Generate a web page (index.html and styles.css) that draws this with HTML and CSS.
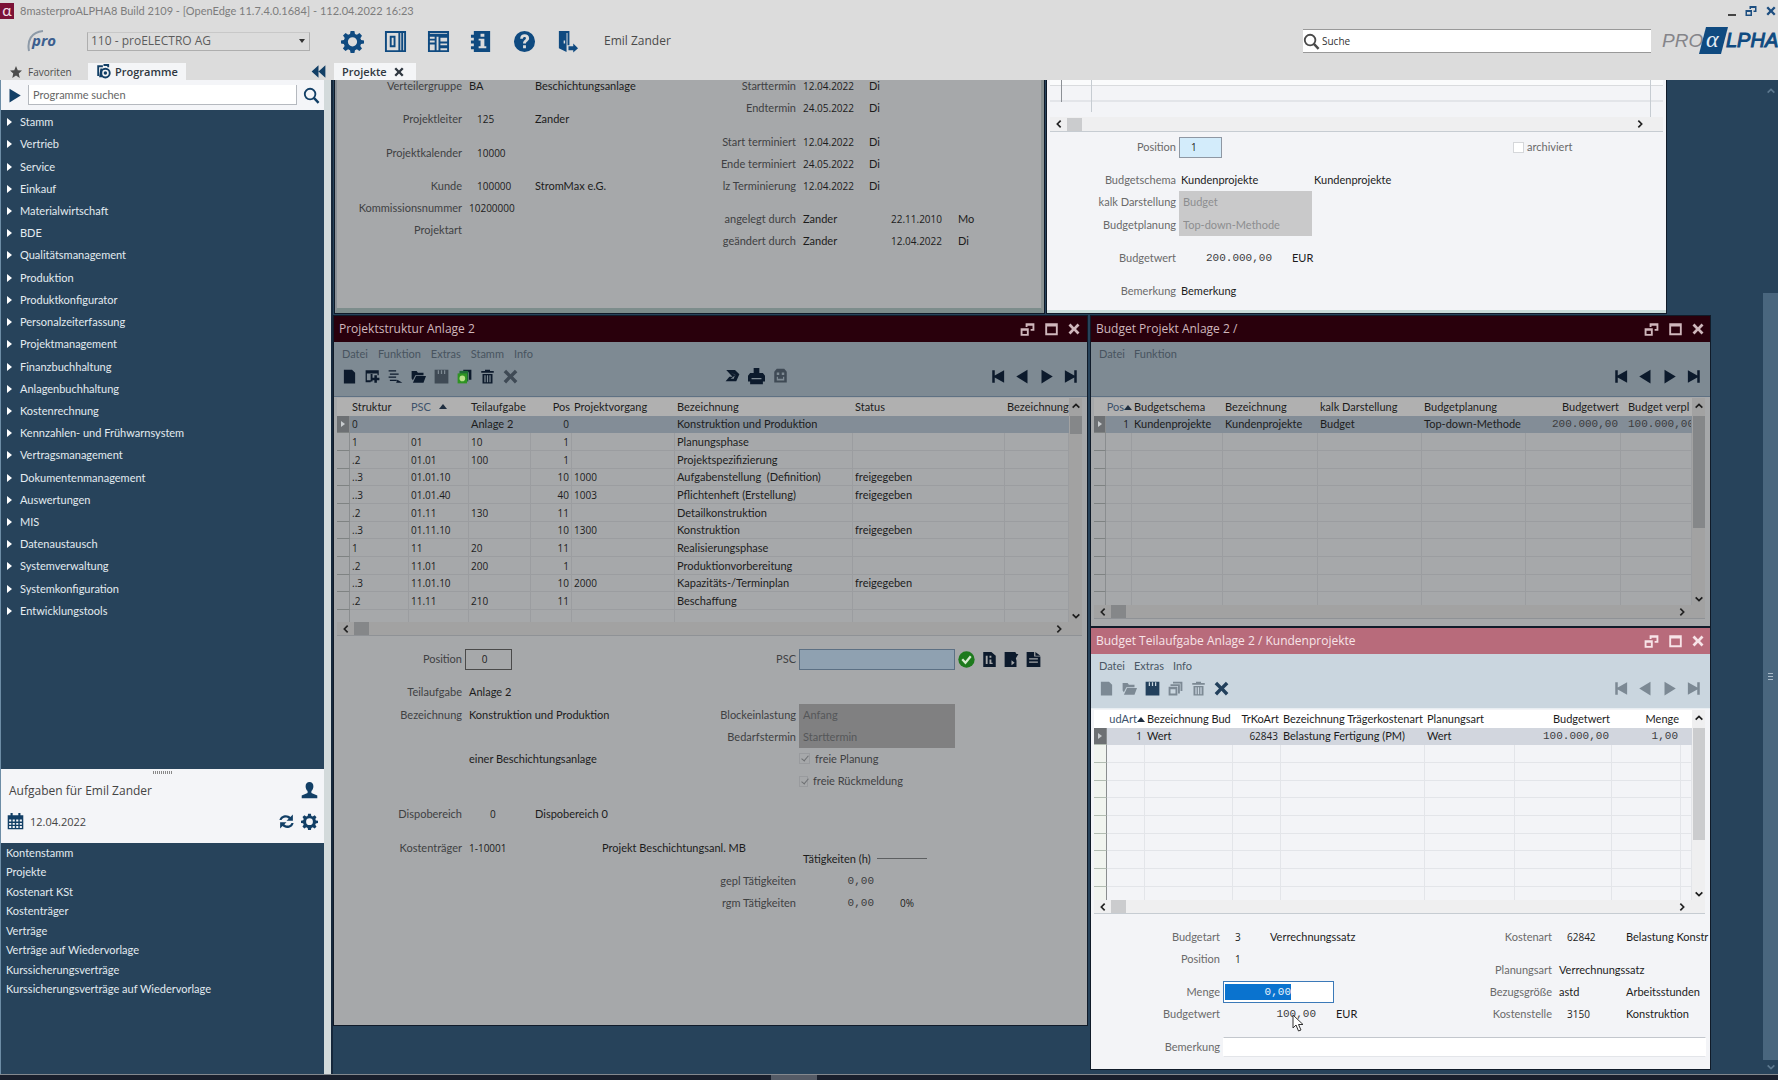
FILE: index.html
```html
<!DOCTYPE html>
<html lang="de">
<head>
<meta charset="utf-8">
<title>proALPHA - Projekte</title>
<link rel="stylesheet" href="styles.css">
</head>
<body>
<svg class="sprite" aria-hidden="true">
  <symbol id="gear" viewBox="0 0 24 24"><path fill-rule="evenodd" d="M10 1h4l.6 3.1 2 .9 2.7-1.8 2.6 2.7-1.7 2.6.8 2L24 11v3l-3.1.7-.8 1.9 1.8 2.7-2.7 2.6-2.6-1.7-2 .8L14 24h-4l-.6-3-2-.8-2.7 1.7L2 19.200l1.800-2.600-.8-2L0 14v-3l3.100-.6.8-2L2.100 5.800 4.800 3.100l2.600 1.800 2-.8zM12 7.500a4.800 4.800 0 1 0 0 9.600 4.800 4.800 0 0 0 0-9.600z"/></symbol>
  <symbol id="cols" viewBox="0 0 24 24"><path fill-rule="evenodd" d="M1 1h22v22H1zM3 3v18h12V3zM6 6h6v12H6zM8 8v8h2V8zM17 3v18h1V3zM20 3v18h1V3z"/></symbol>
  <symbol id="layout" viewBox="0 0 24 24"><path fill-rule="evenodd" d="M1 1h22v22H1zM3 3v1h18V3zM3 7v2h5V7zM3 11v2h5v-2zM3 15v6h5v-6zM10 7v14h2V7zM14 8v4h7V8zM14 14v2h7v-2zM14 19v2h7v-2z"/></symbol>
  <symbol id="infobook" viewBox="0 0 24 24"><path fill-rule="evenodd" d="M4 1h17v22H4v-3H1v-3h3v-3H1v-3h3V8H1V5h3zM11 4v3h4V4zM9 9v2h2v6H9v2h8v-2h-2V9z"/></symbol>
  <symbol id="help" viewBox="0 0 24 24"><path fill-rule="evenodd" d="M12 1a11 11 0 1 0 0 22 11 11 0 0 0 0-22zM7.500 9C7.500 6 9.500 4.500 12.200 4.500c2.600 0 4.600 1.500 4.600 4 0 3-3.300 3.300-3.300 5.500h-3c0-3.600 3-3.500 3-5.400 0-.9-.6-1.400-1.500-1.400s-1.600.6-1.700 1.800zM10.500 16h3v3h-3z"/></symbol>
  <symbol id="exit" viewBox="0 0 24 24"><path fill-rule="evenodd" d="M3 1h11v15h-2V3h-1v20L3 19zM8 11v3h1.500v-3z"/><path d="M13 17h5v-3l5 5-5 4.500V21h-5z"/></symbol>
  <symbol id="star" viewBox="0 0 24 24"><path d="M12 0l3.500 8.500L24 9l-6.500 5.800L19.500 24 12 19l-7.500 5 2-9.200L0 9l8.500-.5z"/></symbol>
  <symbol id="programs" viewBox="0 0 24 24"><path d="M2 2h9v3H5v14H2zM7 7h3v14H5z"/><path fill-rule="evenodd" d="M15 6a8.500 8.500 0 1 0 0 17 8.500 8.500 0 0 0 0-17zM15 9a5.500 5.500 0 1 1 0 11 5.500 5.500 0 0 1 0-11z"/><circle cx="15" cy="14.500" r="2.800"/><path d="M12 0h9v5h-3V3h-6z"/></symbol>
  <symbol id="rewind" viewBox="0 0 24 24"><path d="M12 2v20L1 12zM23 2v20L12 12z"/></symbol>
  <symbol id="play" viewBox="0 0 24 24"><path d="M4 1l18 11L4 23z"/></symbol>
  <symbol id="back" viewBox="0 0 24 24"><path d="M20 1L2 12l18 11z"/></symbol>
  <symbol id="first" viewBox="0 0 24 24"><path d="M2 2h4v8.500L21 2v20L6 13.500V22H2z"/></symbol>
  <symbol id="last" viewBox="0 0 24 24"><path d="M22 2h-4v8.500L3 2v20l15-8.500V22h4z"/></symbol>
  <symbol id="lens" viewBox="0 0 24 24"><circle cx="10" cy="10" r="7.500" fill="none" stroke="currentColor" stroke-width="2.600"/><path d="M15 15l7 7.500" stroke="currentColor" stroke-width="3.400"/></symbol>
  <symbol id="calendar" viewBox="0 0 24 24"><path fill-rule="evenodd" d="M1 3h4V0h3v3h8V0h3v3h4v20H1zM3 9v3h3V9zm5 0v3h3V9zm5 0v3h3V9zm5 0v3h3V9zM3 14v2.500h3V14zm5 0v2.500h3V14zm5 0v2.500h3V14zm5 0v2.500h3V14zM3 18.500V21h3v-2.500zm5 0V21h3v-2.500zm5 0V21h3v-2.500zm5 0V21h3v-2.500z"/></symbol>
  <symbol id="person" viewBox="0 0 24 24"><path d="M12 0c3.500 0 5.500 2.700 5.500 6 0 3-1.200 5.500-2.800 6.800v2.700L23 19v4H1v-4l8.300-3.500v-2.700C7.700 11.500 6.500 9 6.500 6c0-3.300 2-6 5.500-6z"/></symbol>
  <symbol id="refresh" viewBox="0 0 24 24"><path d="M2 10c1-5 5-7 9-7 3 0 5 1 6.500 2.500L21 2v9h-9l3-3c-1-1-2.500-1.800-4.500-1.800C8 6.200 6 7.500 5 10zM22 14c-1 5-5 7-9 7-3 0-5-1-6.500-2.500L3 22v-9h9l-3 3c1 1 2.500 1.800 4.500 1.800 2.500 0 4.500-1.300 5.500-3.800z"/></symbol>
  <symbol id="page" viewBox="0 0 24 24"><path d="M3 1h13l5 5v17H3z"/></symbol>
  <symbol id="tableplus" viewBox="0 0 24 24"><path fill-rule="evenodd" d="M1 2h21v8h-2V7H3v11h6v3H1zM9 8h3v12H9z"/><path d="M15 10h4v4h4v4h-4v4h-4v-4h-4v-4h4z"/></symbol>
  <symbol id="listadd" viewBox="0 0 24 24"><path d="M1 2h12v2H1zM3 7h14v2H3zM1 12h12v2H1zM3 17h11v2H3zM15 17l8 5H13z"/></symbol>
  <symbol id="folder" viewBox="0 0 24 24"><path d="M1 3h8l2 3h9v4H7l-4 8-2-3z"/><path d="M8 11h16l-4 11H3z"/></symbol>
  <symbol id="save" viewBox="0 0 24 24"><path fill-rule="evenodd" d="M1 1h22v22H1zM6 2v6h2V2zm5 0v6h2V2zm5 0v6h2V2z"/></symbol>
  <symbol id="copies" viewBox="0 0 24 24"><path fill-rule="evenodd" d="M8 1h15v15h-3V4H8zM4 5h15v15h-3V8H4zM1 9h14v14H1zM4 13v7h8v-7z"/></symbol>
  <symbol id="copygreen" viewBox="0 0 24 24"><path d="M10 1h13v16h-4V5h-9z"/><path fill="#1d6a35" d="M4 3h14v17H4z"/><path fill="#2f9422" d="M1 7h15v16H1z"/><circle cx="8.500" cy="15" r="4.500" fill="#b9e08a"/></symbol>
  <symbol id="trash" viewBox="0 0 24 24"><path fill-rule="evenodd" d="M8 1h8v2h6v3H2V3h6zM4 8h16v15H4zM7 10v11h2V10zm4 0v11h2V10zm4 0v11h2V10z"/></symbol>
  <symbol id="cross" viewBox="0 0 24 24"><path d="M5 1l7 7.500L19 1l4 4-7 7 7 7-4 4-7-7.500L5 23l-4-4 7-7-7-7z"/></symbol>
  <symbol id="swoosh" viewBox="0 0 24 24"><path fill-rule="evenodd" d="M2 3h14l7 7-5 11H1l6-7h5zM9 7l7 4-2 6H9l8-6z"/></symbol>
  <symbol id="printer" viewBox="0 0 24 24"><path fill-rule="evenodd" d="M8 0h8v7h5l3 4v8h-3v4H3v-4H0v-8l3-4h5zM5 14v2h14v-2z"/></symbol>
  <symbol id="mask" viewBox="0 0 24 24"><path fill-rule="evenodd" d="M6 1h12l4 5v17H2V6zM6 7v4h4V7zm8 0v4h4V7zM6 14v6h12v-6h-2v3H8v-3z"/></symbol>
  <symbol id="restore" viewBox="0 0 24 24"><path fill-rule="evenodd" d="M9 2h14v12h-6v-3h3V6h-8v2H9zM1 10h13v12H1zM4 14v5h7v-5z"/></symbol>
  <symbol id="max" viewBox="0 0 24 24"><path fill-rule="evenodd" d="M2 2h20v19H2zM5 7v11h14V7z"/></symbol>
  <symbol id="doca" viewBox="0 0 24 24"><path fill-rule="evenodd" d="M2 0h13l7 6v18H2zM6 6v13h3V6zm6 0v3h3V6zm0 6v7h5v-2h-2v-5z"/></symbol>
  <symbol id="docb" viewBox="0 0 24 24"><path fill-rule="evenodd" d="M1 0h17l2 3h3l-4 7 1 4v10H1zM12 13l5 4-5 4z"/></symbol>
  <symbol id="docc" viewBox="0 0 24 24"><path fill-rule="evenodd" d="M1 0h12v7h10v17H1zM15 0l8 6h-8zM5 10v2h14v-2zm0 5v2h14v-2z"/></symbol>
  <symbol id="check" viewBox="0 0 24 24"><circle cx="12" cy="12" r="11.500" fill="#1d7a1d"/><path d="M6 11.500l4.500 5L18 7.500" fill="none" stroke="#d6ecd0" stroke-width="3.200"/></symbol>
  <symbol id="cl" viewBox="0 0 12 12"><path d="M8 2L4 6l4 4" fill="none" stroke="currentColor" stroke-width="2"/></symbol>
  <symbol id="cr" viewBox="0 0 12 12"><path d="M4 2l4 4-4 4" fill="none" stroke="currentColor" stroke-width="2"/></symbol>
  <symbol id="cu" viewBox="0 0 12 12"><path d="M2 8l4-4 4 4" fill="none" stroke="currentColor" stroke-width="2"/></symbol>
  <symbol id="cd" viewBox="0 0 12 12"><path d="M2 4l4 4 4-4" fill="none" stroke="currentColor" stroke-width="2"/></symbol>
</svg>

<header class="top">
  <div class="caption">
    <span class="alpha">α</span>
    <span class="caption-text">8masterproALPHA8 Build 2109 - [OpenEdge 11.7.4.0.1684] - 112.04.2022 16:23</span>
    <div class="caption-buttons">
      <button type="button" aria-label="Minimieren"><span class="dash"></span></button>
      <button type="button" aria-label="Wiederherstellen"><svg class="i12"><use href="#restore"/></svg></button>
      <button type="button" aria-label="Schließen"><svg class="i10"><use href="#cross"/></svg></button>
    </div>
  </div>
  <div class="appbar">
    <svg class="prologo" viewBox="0 0 32 24"><path d="M2 22C0 12 4 3 16 2" fill="none" stroke="#8d9aa8" stroke-width="2"/><text x="5" y="17" class="prologo-text">pro</text></svg>
    <span class="firm"><select aria-label="Firma"><option>110 - proELECTRO AG</option></select></span>
    <div class="appicons">
      <button type="button" aria-label="Einstellungen"><svg class="i22"><use href="#gear"/></svg></button>
      <button type="button" aria-label="Spalten"><svg class="i22"><use href="#cols"/></svg></button>
      <button type="button" aria-label="Layout"><svg class="i22"><use href="#layout"/></svg></button>
      <button type="button" aria-label="Info"><svg class="i22"><use href="#infobook"/></svg></button>
      <button type="button" aria-label="Hilfe"><svg class="i22"><use href="#help"/></svg></button>
      <button type="button" aria-label="Abmelden"><svg class="i22"><use href="#exit"/></svg></button>
    </div>
    <span class="user">Emil Zander</span>
    <label class="search"><svg class="i16"><use href="#lens"/></svg><input type="text" value="Suche" aria-label="Suche"></label>
    <svg class="brand" viewBox="0 0 116 28"><text x="0" y="20" class="brand-grey">PRO</text><path d="M44 0h22l-7 27H37z" fill="#0f4a80"/><text x="44" y="20" class="brand-alpha">α</text><text x="64" y="20" class="brand-blue">LPHA</text></svg>
  </div>
  <div class="tabs">
    <div class="side-tabs">
      <button type="button" class="tab fav"><svg class="i12"><use href="#star"/></svg>Favoriten</button>
      <button type="button" class="tab active prog"><svg class="i14"><use href="#programs"/></svg>Programme</button>
      <button type="button" class="collapse" aria-label="Einklappen"><svg class="i14"><use href="#rewind"/></svg></button>
    </div>
    <button type="button" class="tab active doc">Projekte<svg class="i10"><use href="#cross"/></svg></button>
  </div>
</header>

<main class="main">
  <aside class="side">
    <div class="side-search">
      <svg class="i14"><use href="#play"/></svg>
      <input type="text" value="Programme suchen" aria-label="Programme suchen">
      <svg class="i16"><use href="#lens"/></svg>
    </div>
    <nav class="menu">
      <ul>
        <li><a href="#">Stamm</a></li><li><a href="#">Vertrieb</a></li><li><a href="#">Service</a></li><li><a href="#">Einkauf</a></li>
        <li><a href="#">Materialwirtschaft</a></li><li><a href="#">BDE</a></li><li><a href="#">Qualitätsmanagement</a></li><li><a href="#">Produktion</a></li>
        <li><a href="#">Produktkonfigurator</a></li><li><a href="#">Personalzeiterfassung</a></li><li><a href="#">Projektmanagement</a></li><li><a href="#">Finanzbuchhaltung</a></li>
        <li><a href="#">Anlagenbuchhaltung</a></li><li><a href="#">Kostenrechnung</a></li><li><a href="#">Kennzahlen- und Frühwarnsystem</a></li><li><a href="#">Vertragsmanagement</a></li>
        <li><a href="#">Dokumentenmanagement</a></li><li><a href="#">Auswertungen</a></li><li><a href="#">MIS</a></li><li><a href="#">Datenaustausch</a></li>
        <li><a href="#">Systemverwaltung</a></li><li><a href="#">Systemkonfiguration</a></li><li><a href="#">Entwicklungstools</a></li>
      </ul>
    </nav>
    <section class="tasks-head">
      <span class="grip"></span>
      <div class="tasks-row"><span>Aufgaben für Emil Zander</span><svg class="i16 push"><use href="#person"/></svg></div>
      <div class="tasks-row"><svg class="i16"><use href="#calendar"/></svg><span class="date">12.04.2022</span><svg class="i16 push"><use href="#refresh"/></svg><svg class="i16"><use href="#gear"/></svg></div>
    </section>
    <nav class="tasks">
      <ul>
        <li><a href="#">Kontenstamm</a></li><li><a href="#">Projekte</a></li><li><a href="#">Kostenart KSt</a></li><li><a href="#">Kostenträger</a></li>
        <li><a href="#">Verträge</a></li><li><a href="#">Verträge auf Wiedervorlage</a></li><li><a href="#">Kurssicherungsverträge</a></li><li><a href="#">Kurssicherungsverträge auf Wiedervorlage</a></li>
      </ul>
    </nav>
  </aside>

  <div class="desktop">
    <section class="win dim w-project">
      <div class="form f-project">
        <span class="l r2">Verteilergruppe</span><span class="v r2">BA</span><span class="v c3 r2">Beschichtungsanlage</span>
        <span class="l r5">Projektleiter</span><span class="v n in r5">125</span><span class="v c3 r5">Zander</span>
        <span class="l r8">Projektkalender</span><span class="v n in r8">10000</span>
        <span class="l r11">Kunde</span><span class="v n in r11">100000</span><span class="v c3 r11">StromMax e.G.</span>
        <span class="l r13">Kommissionsnummer</span><span class="v n r13">10200000</span>
        <span class="l r15">Projektart</span>
        <span class="l c3 r2">Starttermin</span><span class="v n c4 r2">12.04.2022</span><span class="v c5 r2">Di</span>
        <span class="l c3 r4">Endtermin</span><span class="v n c4 r4">24.05.2022</span><span class="v c5 r4">Di</span>
        <span class="l c3 r7">Start terminiert</span><span class="v n c4 r7">12.04.2022</span><span class="v c5 r7">Di</span>
        <span class="l c3 r9">Ende terminiert</span><span class="v n c4 r9">24.05.2022</span><span class="v c5 r9">Di</span>
        <span class="l c3 r11">lz Terminierung</span><span class="v n c4 r11">12.04.2022</span><span class="v c5 r11">Di</span>
        <span class="l c3 r14">angelegt durch</span><span class="v c4 r14">Zander</span><span class="v n c6 r14">22.11.2010</span><span class="v c7 r14">Mo</span>
        <span class="l c3 r16">geändert durch</span><span class="v c4 r16">Zander</span><span class="v n c6 r16">12.04.2022</span><span class="v c7 r16">Di</span>
      </div>
    </section>

    <section class="win lit w-budget">
      <div class="stub"><i></i><i></i><i></i></div>
      <div class="hscroll"><svg class="i10"><use href="#cl"/></svg><span class="thumb"></span><svg class="i10 push"><use href="#cr"/></svg></div>
      <div class="form f-budget">
        <label class="l r1" for="b-pos">Position</label><input id="b-pos" class="field blue n r1" value="1">
        <label class="tick c5 r1"><input type="checkbox" disabled>archiviert</label>
        <span class="l r4">Budgetschema</span><span class="v r4">Kundenprojekte</span><span class="v c4 second r4">Kundenprojekte</span>
        <label class="l r6" for="b-kalk">kalk Darstellung</label><select id="b-kalk" class="r6" disabled><option>Budget</option></select>
        <label class="l r8" for="b-plan">Budgetplanung</label><select id="b-plan" class="r8" disabled><option>Top-down-Methode</option></select>
        <span class="l r11">Budgetwert</span><span class="v m right r11">200.000,00</span><span class="v c3 wide r11">EUR</span>
        <span class="l r14">Bemerkung</span><span class="v r14">Bemerkung</span>
      </div>
    </section>

    <section class="win dim w-structure">
      <div class="title"><h2>Projektstruktur Anlage 2</h2><button type="button" aria-label="Wiederherstellen"><svg class="i14"><use href="#restore"/></svg></button><button type="button" aria-label="Maximieren"><svg class="i14"><use href="#max"/></svg></button><button type="button" aria-label="Schließen"><svg class="i12"><use href="#cross"/></svg></button></div>
      <div class="bars">
        <div class="menubar"><button type="button">Datei</button><button type="button">Funktion</button><button type="button">Extras</button><button type="button">Stamm</button><button type="button">Info</button></div>
        <div class="toolbar">
          <svg class="i14"><use href="#page"/></svg><svg class="i14"><use href="#tableplus"/></svg><svg class="i14"><use href="#listadd"/></svg><svg class="i14"><use href="#folder"/></svg><svg class="i14 off"><use href="#save"/></svg><svg class="i14"><use href="#copygreen"/></svg><svg class="i14"><use href="#trash"/></svg><svg class="i14 off"><use href="#cross"/></svg>
          <span class="mid"><svg class="i14"><use href="#swoosh"/></svg><svg class="i16"><use href="#printer"/></svg><svg class="i14 off"><use href="#mask"/></svg></span>
          <span class="nav push"><svg class="i14"><use href="#first"/></svg><svg class="i14"><use href="#back"/></svg><svg class="i14"><use href="#play"/></svg><svg class="i14"><use href="#last"/></svg></span>
        </div>
      </div>
      <div class="tablebox">
        <table class="t-structure">
          <colgroup><col><col><col><col><col><col><col><col><col></colgroup>
          <thead><tr><th></th><th>Struktur</th><th>PSC &nbsp;<b class="sort"></b></th><th>Teilaufgabe</th><th class="right">Pos</th><th>Projektvorgang</th><th>Bezeichnung</th><th>Status</th><th>Bezeichnung</th></tr></thead>
          <tbody>
            <tr class="sel"><td></td><td class="n">0</td><td class="n"></td><td>Anlage 2</td><td class="n right">0</td><td class="n"></td><td>Konstruktion und Produktion</td><td></td><td></td></tr>
            <tr><td></td><td class="n">1</td><td class="n">01</td><td class="n">10</td><td class="n right">1</td><td class="n"></td><td>Planungsphase</td><td></td><td></td></tr>
            <tr><td></td><td class="n">.2</td><td class="n">01.01</td><td class="n">100</td><td class="n right">1</td><td class="n"></td><td>Projektspezifizierung</td><td></td><td></td></tr>
            <tr><td></td><td class="n">..3</td><td class="n">01.01.10</td><td class="n"></td><td class="n right">10</td><td class="n">1000</td><td>Aufgabenstellung&nbsp; (Definition)</td><td>freigegeben</td><td></td></tr>
            <tr><td></td><td class="n">..3</td><td class="n">01.01.40</td><td class="n"></td><td class="n right">40</td><td class="n">1003</td><td>Pflichtenheft (Erstellung)</td><td>freigegeben</td><td></td></tr>
            <tr><td></td><td class="n">.2</td><td class="n">01.11</td><td class="n">130</td><td class="n right">11</td><td class="n"></td><td>Detailkonstruktion</td><td></td><td></td></tr>
            <tr><td></td><td class="n">..3</td><td class="n">01.11.10</td><td class="n"></td><td class="n right">10</td><td class="n">1300</td><td>Konstruktion</td><td>freigegeben</td><td></td></tr>
            <tr><td></td><td class="n">1</td><td class="n">11</td><td class="n">20</td><td class="n right">11</td><td class="n"></td><td>Realisierungsphase</td><td></td><td></td></tr>
            <tr><td></td><td class="n">.2</td><td class="n">11.01</td><td class="n">200</td><td class="n right">1</td><td class="n"></td><td>Produktionvorbereitung</td><td></td><td></td></tr>
            <tr><td></td><td class="n">..3</td><td class="n">11.01.10</td><td class="n"></td><td class="n right">10</td><td class="n">2000</td><td>Kapazitäts-/Terminplan</td><td>freigegeben</td><td></td></tr>
            <tr><td></td><td class="n">.2</td><td class="n">11.11</td><td class="n">210</td><td class="n right">11</td><td class="n"></td><td>Beschaffung</td><td></td><td></td></tr>
            <tr class="rest"><td></td><td></td><td></td><td></td><td></td><td></td><td></td><td></td><td></td></tr>
          </tbody>
        </table>
        <div class="vscroll"><svg class="i10"><use href="#cu"/></svg><span class="thumb short"></span><svg class="i10 end"><use href="#cd"/></svg></div>
      </div>
      <div class="hscroll"><svg class="i10"><use href="#cl"/></svg><span class="thumb"></span><svg class="i10 push"><use href="#cr"/></svg></div>
      <div class="form f-structure">
        <label class="l r2" for="s-pos">Position</label><input id="s-pos" class="field plain n r2" value="0">
        <span class="l r5">Teilaufgabe</span><span class="v r5">Anlage 2</span>
        <span class="l r7">Bezeichnung</span><span class="v r7">Konstruktion und Produktion</span>
        <span class="v r11">einer Beschichtungsanlage</span>
        <span class="l r16">Dispobereich</span><span class="v n in2 r16">0</span><span class="v c3 r16">Dispobereich 0</span>
        <span class="l r19">Kostenträger</span><span class="v n r19">1-10001</span><span class="v c4 r19">Projekt Beschichtungsanl. MB</span>
        <label class="l c4 r2" for="s-psc">PSC</label>
        <span class="psc c5 r2"><input id="s-psc" class="field steel"><svg class="i16"><use href="#check"/></svg><svg class="i14"><use href="#doca"/></svg><svg class="i14"><use href="#docb"/></svg><svg class="i14"><use href="#docc"/></svg></span>
        <label class="l c4 r7" for="s-block">Blockeinlastung</label><select id="s-block" class="c5 r7" disabled><option>Anfang</option></select>
        <label class="l c4 r9" for="s-bed">Bedarfstermin</label><select id="s-bed" class="c5 r9" disabled><option>Starttermin</option></select>
        <label class="tick c5 r11"><input type="checkbox" checked disabled>freie Planung</label>
        <label class="tick c5 r13"><input type="checkbox" checked disabled>freie Rückmeldung</label>
        <span class="v c5 group r20">Tätigkeiten (h)</span>
        <span class="l c4 r22">gepl Tätigkeiten</span><span class="v m c5 hours r22">0,00</span>
        <span class="l c4 r24">rgm Tätigkeiten</span><span class="v m c5 hours r24">0,00</span><span class="v n c6 r24">0%</span>
      </div>
    </section>

    <section class="win dim w-plan">
      <div class="title"><h2>Budget Projekt Anlage 2 /</h2><button type="button" aria-label="Wiederherstellen"><svg class="i14"><use href="#restore"/></svg></button><button type="button" aria-label="Maximieren"><svg class="i14"><use href="#max"/></svg></button><button type="button" aria-label="Schließen"><svg class="i12"><use href="#cross"/></svg></button></div>
      <div class="bars">
        <div class="menubar"><button type="button">Datei</button><button type="button">Funktion</button></div>
        <div class="toolbar"><span class="nav push"><svg class="i14"><use href="#first"/></svg><svg class="i14"><use href="#back"/></svg><svg class="i14"><use href="#play"/></svg><svg class="i14"><use href="#last"/></svg></span></div>
      </div>
      <div class="tablebox">
        <table class="t-plan">
          <colgroup><col><col><col><col><col><col><col><col></colgroup>
          <thead><tr><th></th><th class="cut"><span>Pos</span><b class="sort"></b></th><th>Budgetschema</th><th>Bezeichnung</th><th>kalk Darstellung</th><th>Budgetplanung</th><th class="right">Budgetwert</th><th class="far">Budget verpl</th></tr></thead>
          <tbody data-blank="9">
            <tr class="sel"><td></td><td class="n right">1</td><td>Kundenprojekte</td><td>Kundenprojekte</td><td>Budget</td><td>Top-down-Methode</td><td class="m right">200.000,00</td><td class="m far">100.000,00</td></tr>
          </tbody>
        </table>
        <div class="vscroll"><svg class="i10"><use href="#cu"/></svg><span class="thumb long"></span><svg class="i10 end"><use href="#cd"/></svg></div>
      </div>
      <div class="hscroll"><svg class="i10"><use href="#cl"/></svg><span class="thumb"></span><svg class="i10 push"><use href="#cr"/></svg></div>
    </section>

    <section class="win lit w-part">
      <div class="title"><h2>Budget Teilaufgabe Anlage 2 / Kundenprojekte</h2><button type="button" aria-label="Wiederherstellen"><svg class="i14"><use href="#restore"/></svg></button><button type="button" aria-label="Maximieren"><svg class="i14"><use href="#max"/></svg></button><button type="button" aria-label="Schließen"><svg class="i12"><use href="#cross"/></svg></button></div>
      <div class="bars">
        <div class="menubar"><button type="button">Datei</button><button type="button">Extras</button><button type="button">Info</button></div>
        <div class="toolbar">
          <svg class="i14 off"><use href="#page"/></svg><svg class="i14 off"><use href="#folder"/></svg><svg class="i14"><use href="#save"/></svg><svg class="i14 off"><use href="#copies"/></svg><svg class="i14 off"><use href="#trash"/></svg><svg class="i14"><use href="#cross"/></svg>
          <span class="nav push off"><svg class="i14"><use href="#first"/></svg><svg class="i14"><use href="#back"/></svg><svg class="i14"><use href="#play"/></svg><svg class="i14"><use href="#last"/></svg></span>
        </div>
      </div>
      <div class="tablebox">
        <table class="t-part">
          <colgroup><col><col><col><col><col><col><col><col><col></colgroup>
          <thead><tr><th></th><th class="cut"><span>udArt</span><b class="sort"></b></th><th>Bezeichnung Bud</th><th class="right">TrKoArt</th><th>Bezeichnung Trägerkostenart</th><th>Planungsart</th><th class="right">Budgetwert</th><th class="right">Menge</th><th></th></tr></thead>
          <tbody data-blank="8">
            <tr class="sel"><td></td><td class="n right">1</td><td>Wert</td><td class="n right">62843</td><td>Belastung Fertigung (PM)</td><td>Wert</td><td class="m right">100.000,00</td><td class="m right">1,00</td><td></td></tr>
          </tbody>
        </table>
        <div class="vscroll"><svg class="i10"><use href="#cu"/></svg><span class="thumb long"></span><svg class="i10 end"><use href="#cd"/></svg></div>
      </div>
      <div class="hscroll"><svg class="i10"><use href="#cl"/></svg><span class="thumb"></span><svg class="i10 push"><use href="#cr"/></svg></div>
      <div class="form f-part">
        <span class="l r2">Budgetart</span><span class="v n in r2">3</span><span class="v c3 r2">Verrechnungssatz</span>
        <span class="l r4">Position</span><span class="v n in r4">1</span>
        <label class="l r7" for="p-menge">Menge</label><span class="amount r7"><input id="p-menge" class="m" value="0,00"></span>
        <span class="l r9">Budgetwert</span><span class="v m right total r9">100,00</span><span class="v c4 r9">EUR</span>
        <label class="l r12" for="p-bem">Bemerkung</label><input id="p-bem" class="field white r12">
        <span class="l c4 r2">Kostenart</span><span class="v n in r2 c5">62842</span><span class="v c6 r2">Belastung Konstr</span>
        <span class="l c4 r5">Planungsart</span><span class="v c5 r5">Verrechnungssatz</span>
        <span class="l c4 r7">Bezugsgröße</span><span class="v c5 r7">astd</span><span class="v c6 r7">Arbeitsstunden</span>
        <span class="l c4 r9">Kostenstelle</span><span class="v n in c5 r9">3150</span><span class="v c6 r9">Konstruktion</span>
      </div>
    </section>

    <svg class="pointer" viewBox="0 0 12 18"><path d="M1 1v13l3-3 2.500 6 2.500-1-2.500-5.500H11z" fill="#fff" stroke="#333"/></svg>
    <div class="deskscroll"><svg class="i10"><use href="#cu"/></svg><span class="deskthumb"><i></i></span><svg class="i10"><use href="#cd"/></svg></div>
  </div>
</main>
<footer class="strip"><span></span></footer>
<script src="script.js"></script>
</body>
</html>
```
FILE: styles.css
```css
* { box-sizing: border-box; }
body {
  margin: 0;
  height: 100vh;
  display: flex;
  flex-direction: column;
  overflow: hidden;
  font: 11px/16px Lato, "Noto Sans", sans-serif;
  color: #1c1c1c;
  background: #27435b;
}
button, input, select { font: inherit; color: inherit; margin: 0; }
button { border: 0; padding: 0; background: none; display: flex; align-items: center; }
ul { list-style: none; margin: 0; padding: 0; }
a { color: inherit; text-decoration: none; }
svg { display: block; flex: none; fill: currentColor; }
.sprite { position: absolute; width: 0; height: 0; }
.i10 { width: 10px; height: 10px; }
.i12 { width: 12px; height: 12px; }
.i14 { width: 15px; height: 15px; }
.i16 { width: 17px; height: 17px; }
.i22 { width: 23px; height: 23px; }
.push { margin-left: auto; }
.n { font-family: "Open Sans", sans-serif; font-size: 10px; }
.m { font-family: "Liberation Mono", monospace; color: #3c3c3e; }
.right { text-align: right; }

/* header */
.top { background: #dcdcdc; height: 80px; flex: none; display: flex; flex-direction: column; }
.caption { display: flex; height: 21px; align-items: center; color: #7c7c7c; }
.alpha { width: 14px; height: 16px; background: #7c1237; color: #f3dfe5; font-size: 16px; line-height: 13px; text-align: center; margin-right: 6px; }
.caption-buttons { margin-left: auto; display: flex; gap: 9px; padding-right: 2px; color: #1d4e80; }
.dash { width: 8px; height: 2px; background: #444; align-self: flex-end; margin-bottom: 1px; }
.caption-buttons button { height: 12px; }
.appbar { display: flex; align-items: center; height: 42px; padding-bottom: 2px; font: 12px/16px "Open Sans", sans-serif; color: #4a4a4a; }
.prologo { width: 32px; height: 24px; margin-left: 27px; }
.prologo-text { font: italic bold 15px "Open Sans", sans-serif; fill: #3c5f8f; }
.firm { display: flex; align-items: center; width: 223px; height: 19px; margin-left: 28px; border: 1px solid #aeaeae; border-top-color: #c8c8c8; color: #5c5c5c; }
.firm select { appearance: none; flex: 1; border: 0; background: none; padding: 0 3px; }
.firm::after { content: ""; border: 3px solid transparent; border-top: 4px solid #333; border-bottom: 0; margin-right: 4px; }
.appicons { display: flex; gap: 20px; margin-left: 31px; color: #0f4a80; }
.user { margin-left: 25px; }
.search { margin-left: auto; width: 348px; height: 24px; background: #fff; border: 1px solid #999; border-width: 1px 0; display: flex; align-items: center; gap: 1px; color: #4a4a4a; font-size: 10px; }
.search input { border: 0; outline: 0; flex: 1; padding: 0 1px; color: #333; }
.brand { width: 116px; height: 28px; margin-left: 11px; }
.brand-grey { font: italic 19px "Liberation Sans", sans-serif; fill: #85858a; }
.brand-blue { font: italic 20px "Liberation Sans", sans-serif; fill: #0f4a80; stroke: #0f4a80; }
.brand-alpha { font: italic 24px "Liberation Serif", serif; fill: #e6edf4; }
.tabs { display: flex; height: 17px; }
.side-tabs { width: 334px; display: flex; }
.tab { font: 11px/16px "Open Sans", sans-serif; color: #4d4d4d; gap: 6px; }
.fav { padding-left: 10px; width: 88px; font-size: 10px; }
.tab.active { background: #f4f5f7; color: #2f3740; font-weight: 600; }
.prog { width: 98px; padding-left: 8px; gap: 4px; }
.prog svg, .collapse { color: #123f66; }
.collapse { margin-left: auto; margin-right: 8px; }
.doc { width: 82px; padding-left: 8px; gap: 7px; }

/* sidebar */
.main { flex: 1; display: flex; min-height: 0; }
.side { width: 331px; flex: none; border-right: 7px solid #d3dadb; border-left: 1px solid #6d8da6; display: flex; flex-direction: column; }
.side-search { height: 30px; flex: none; background: #f4f5f8; display: flex; align-items: center; padding: 0 4px 0 6px; gap: 6px; color: #123f66; }
.side-search input { flex: 1; height: 20px; border: 1px solid #b5b9bf; border-top: 0; background: #fff; color: #666; padding: 0 4px; outline: 0; }
.menu { flex: 1; color: #e3ebf0; min-height: 0; padding-top: 1px; }
.menu ul { height: 511px; display: flex; flex-direction: column; }
.menu li { flex: 1; display: flex; align-items: center; padding-left: 6px; }
.menu li::before { content: ""; border: 4px solid transparent; border-left: 5px solid #fff; border-right: 0; margin-right: 8px; }
.tasks-head { flex: none; height: 74px; background: #f4f5f8; color: #444; font: 12px/16px "Open Sans", sans-serif; display: flex; flex-direction: column; }
.grip { width: 20px; height: 3px; margin: 2px auto 0; background: repeating-linear-gradient(90deg, #888 0 1px, transparent 1px 2px); }
.tasks-row { height: 31px; padding: 2px 6px 0 8px; display: flex; align-items: center; gap: 6px; }
.tasks-row + .tasks-row { padding-left: 6px; }
.tasks-row svg { color: #123f66; }
.date { font-size: 11px; }
.tasks { flex: none; height: 231px; color: #e3ebf0; }
.tasks ul { height: 156px; display: flex; flex-direction: column; }
.tasks li { flex: 1; display: flex; align-items: center; padding-left: 5px; }

/* desktop and windows */
.desktop { flex: 1; position: relative; overflow: hidden; border-left: 2px solid #16283c; }
.win { position: absolute; display: flex; flex-direction: column; border: 1px solid #101b29; overflow: hidden; }
.dim { background: #a6a8aa; --line: #9b9da0; --label: #3f4143; --thumb: #858789; --head: #b0b0b0; --sel: #838d97; --track: #a2a2a2; --stop: #8f9296; }
.lit { background: #f3f4f7; --line: #e3e5e9; --label: #6a6a6a; --thumb: #cbccce; --head: #ffffff; --sel: #d2d6de; --track: #efeff0; --stop: #c6ccd2; }
.w-project { left: 1px; top: -16px; width: 711px; height: 250px; border-width: 0 1px 1px; }
.w-project .form { border: 3px solid #8b9393; border-top: 0; border-bottom: 5px solid #7d8d8c; border-left: 2px solid #8a9096; }
.w-budget { left: 713px; top: 0; width: 621px; height: 234px; border-width: 0 1px 1px; }
.w-budget .form { box-shadow: inset 0 -3px 0 #c9dcd9; }
.w-structure { left: 0; top: 235px; width: 755px; height: 711px; }
.w-plan { left: 757px; top: 235px; width: 621px; height: 312px; }
.w-part { left: 757px; top: 547px; width: 621px; height: 443px; }

.title { height: 26px; flex: none; display: flex; align-items: center; gap: 9px; padding: 0 5px; background: #29000c; color: #cfb7bc; }
.title h2 { margin: 0 auto 0 0; font: 12px/16px "Open Sans", sans-serif; }
.w-part .title { background: #b86b7b; color: #f7e4e8; }
.w-structure .title { padding-right: 7px; }
.w-plan .title, .w-part .title { padding-right: 6px; }
.bars { flex: none; height: 55px; background: #7e8a93; border-bottom: 1px solid #5f7183; color: #0c1a2c; padding: 2px 9px 0 8px; }
.w-part .bars { background: #cad6df; border-color: #e8eef2; color: #22405c; }
.menubar { display: flex; gap: 9px; height: 20px; color: #48545f; }
.w-structure .menubar { gap: 10px; }
.w-part .menubar { color: #4b5865; }
.toolbar { display: flex; align-items: center; gap: 8px; height: 25px; }
.mid { display: flex; gap: 8px; margin-left: 199px; }
.nav { display: flex; gap: 9px; }
.off { color: #3f4a55; }
.w-part .off { color: #7c8994; }

.tablebox { display: flex; flex: none; margin: 1px 5px 0 3px; overflow: hidden; }
.w-structure .tablebox { height: 224px; }
.w-plan .tablebox { height: 207px; }
.w-part .tablebox { height: 190px; }
table { border-collapse: separate; border-spacing: 0; table-layout: fixed; flex: 1; width: 0; align-self: flex-start; }
th, td { padding: 0 2px; font-weight: 400; text-align: left; white-space: nowrap; overflow: hidden; line-height: 16px; height: 17px; }
th.right, td.right { text-align: right; }
th.far, td.far { padding-left: 7px; }
th { background: var(--head); height: 18px; }
td { border-right: 1px solid var(--line); border-bottom: 1px solid var(--line); }
tbody tr:nth-child(3n+2) td, tbody tr:nth-child(3n) td { height: 18px; }
tbody tr.rest td { height: 14px; border-bottom: 0; }
.sel td { background: var(--sel); border-color: var(--sel); }
td:first-child { border-bottom-color: #7f8383; border-right-color: #8a8d8f; }
.lit td:first-child { border-bottom-color: #b3bdb3; background: #f1f4ef; }
.sel td:first-child, .lit .sel td:first-child { background: #6d7073; }
.sel td:first-child::before { content: ""; display: block; width: 0; border: 3px solid transparent; border-left: 4px solid #c9cccf; border-right: 0; margin-left: 2px; }
th b.sort { display: inline-block; border: 4px solid transparent; border-bottom: 5px solid #1f2e40; border-top: 0; vertical-align: 2px; margin-left: 2px; }
th:has(.sort) { color: #3d526b; }
th.cut { padding: 0; display: flex; justify-content: flex-end; align-items: center; }
th.cut b.sort { margin: 0; }
.t-structure col:nth-child(1) { width: 13px; }
.t-structure col:nth-child(2) { width: 59px; }
.t-structure col:nth-child(3) { width: 60px; }
.t-structure col:nth-child(4) { width: 62px; }
.t-structure col:nth-child(5) { width: 41px; }
.t-structure col:nth-child(6) { width: 103px; }
.t-structure col:nth-child(7) { width: 178px; }
.t-structure col:nth-child(8) { width: 152px; }
.t-plan col:nth-child(1) { width: 12px; }
.t-plan col:nth-child(2) { width: 26px; }
.t-plan col:nth-child(3) { width: 91px; }
.t-plan col:nth-child(4) { width: 95px; }
.t-plan col:nth-child(5) { width: 104px; }
.t-plan col:nth-child(6) { width: 104px; }
.t-plan col:nth-child(7) { width: 95px; }
.t-part col:nth-child(1) { width: 13px; }
.t-part col:nth-child(2) { width: 38px; }
.t-part col:nth-child(3) { width: 88px; }
.t-part col:nth-child(4) { width: 48px; }
.t-part col:nth-child(5) { width: 144px; }
.t-part col:nth-child(6) { width: 90px; }
.t-part col:nth-child(7) { width: 97px; }
.t-part col:nth-child(8) { width: 69px; }

.vscroll { flex: none; width: 13px; display: flex; flex-direction: column; align-items: center; background: var(--track); padding: 3px 0 1px; }
.vscroll .thumb { width: 12px; background: var(--thumb); margin-top: 5px; }
.short { height: 18px; }
.long { height: 112px; }
.end { margin-top: auto; }
.hscroll { flex: none; height: 13px; margin: 0 5px 0 3px; padding: 0 18px 0 4px; display: flex; align-items: center; gap: 3px; background: var(--track); box-shadow: 0 1px 0 var(--stop); color: #222; }
.hscroll .thumb { width: 15px; height: 13px; background: var(--thumb); }
.stub { height: 37px; flex: none; margin: 0 3px; display: flex; background: linear-gradient(#fafbfc 5px, #d9dbde 5px 6px, #f3f4f7 6px 20px, #e3e5e9 20px 22px, #f3f4f7 22px); }
.stub i { width: 12px; border-right: 1px solid #c6ccd2; }
.stub i:nth-child(1) { height: 22px; border-right-color: #8c9096; }
.stub i:nth-child(2) { width: 30px; height: 32px; }
.stub i:nth-child(3) { flex: 1; margin-right: 12px; }
.w-budget .hscroll { height: 14px; margin-right: 3px; }

/* forms: half-line raster, each entry takes two raster rows */
.form { flex: 1; display: grid; align-items: center; white-space: nowrap; min-height: 0; }
.f-project { grid-template-columns: 128px 66px 268px 66px 22px 67px 1fr; grid-template-rows: repeat(22, 1fr); }
.f-structure { grid-template-columns: 131px 66px 67px 201px 97px 1fr; grid-template-rows: repeat(35, 1fr); margin-top: 2px; }
.f-budget { grid-template-columns: 132px 109px 22px 203px 1fr; grid-template-rows: repeat(16, 1fr); margin-top: 5px; }
.f-part { grid-template-columns: 132px 43px 66px 223px 67px minmax(0, 1fr); grid-template-rows: repeat(14, 1fr); margin-top: 2px; }
.l { grid-column: 1; justify-self: end; padding-right: 3px; color: var(--label); }
.v { grid-column: 2; padding-left: 4px; }
.f-budget .v, .f-budget select { padding-left: 2px; }
.f-budget .v.second, .f-budget .v.wide { padding-left: 4px; }
.v.in { padding-left: 12px; }
.v.in2 { padding-left: 25px; }
.v.right { padding-right: 16px; }
.c3 { grid-column: 3; } .c4 { grid-column: 4; } .c5 { grid-column: 5; } .c6 { grid-column: 6; } .c7 { grid-column: 7; }
.r1 { grid-row: 1 / span 2; } .r2 { grid-row: 2 / span 2; } .r4 { grid-row: 4 / span 2; } .r5 { grid-row: 5 / span 2; }
.r6 { grid-row: 6 / span 2; } .r7 { grid-row: 7 / span 2; } .r8 { grid-row: 8 / span 2; } .r9 { grid-row: 9 / span 2; }
.r11 { grid-row: 11 / span 2; } .r12 { grid-row: 12 / span 2; } .r13 { grid-row: 13 / span 2; } .r14 { grid-row: 14 / span 2; }
.r15 { grid-row: 15 / span 2; } .r16 { grid-row: 16 / span 2; } .r19 { grid-row: 19 / span 2; } .r20 { grid-row: 20 / span 2; }
.r22 { grid-row: 22 / span 2; } .r24 { grid-row: 24 / span 2; }
.field { border: 1px solid #9aa0a6; border-radius: 0; outline: 0; height: 21px; padding: 0 11px; }
.blue { grid-column: 2; width: 43px; background: #d3ecfb; border-color: #8e97a3; }
.plain { grid-column: 2; width: 47px; background: transparent; border-color: #4a4a4a; text-align: center; padding: 0 8px 0 0; }
.steel { width: 156px; background: #8fa1b1; border-color: #5c7084; }
.white { grid-column: 2 / -1; margin-right: 4px; background: #fff; border-color: #c3c7cd transparent #e3e5e9; height: 20px; }
.psc { display: flex; align-items: center; gap: 7px; }
.psc svg { color: #0c1a2c; }
.psc .field { margin-right: -4px; }
select:disabled { appearance: none; opacity: 1; border: 0; border-radius: 0; align-self: stretch; height: auto; padding: 0 4px; background: #808081; color: #555759; }
.f-structure select { grid-column: 5 / -1; width: 156px; }
.f-budget select { grid-column: 2 / span 3; width: 133px; background: #c9c9ca; color: #8d8e90; }
.v.wide { grid-column: 3 / span 2; }
.tick { display: flex; align-items: center; gap: 3px; color: var(--label); }
.dim .tick { gap: 5px; }
.tick input { appearance: none; width: 11px; height: 11px; border: 1px solid #d5d7da; background: #fff; }
.dim .tick input { background: transparent; border-color: #999b9e; }
.dim .tick input:checked::before { content: ""; display: block; width: 3px; height: 6px; margin: 0 0 0 3px; border: solid #6d6f72; border-width: 0 1px 1px 0; rotate: 40deg; }
.group { display: flex; align-items: center; gap: 6px; }
.group::after { content: ""; width: 50px; border-top: 1px solid #5d5f61; flex: none; }
.hours { justify-self: end; padding-right: 22px; }
.amount { grid-column: 2 / span 3; width: 111px; height: 22px; border: 1px solid #3b79b8; background: #fff; padding: 2px 1px; display: flex; }
.amount input { width: 66px; border: 0; border-radius: 0; outline: 0; padding: 0; background: #0a73cf; color: #e9f3fc; text-align: right; }
.v.total { grid-column: 2 / span 2; }

.pointer { position: absolute; left: 959px; top: 934px; width: 12px; height: 18px; }
.deskscroll { position: absolute; right: 0; top: 0; bottom: 0; width: 15px; display: flex; flex-direction: column; align-items: center; justify-content: space-between; padding: 6px 0 2px; color: #5c788f; }
.deskthumb { width: 15px; flex: 1; margin: 197px 0 2px; background: #49667e; display: flex; align-items: center; justify-content: center; }
.deskthumb i { width: 5px; height: 7px; background: repeating-linear-gradient(#a9bac8 0 1px, transparent 1px 3px); }

.strip { flex: none; height: 6px; background: #191f2c; border-top: 1px solid #84898f; display: flex; justify-content: center; padding-right: 190px; }
.strip span { width: 46px; background: #555b66; }
```
FILE: script.js
```js
// Pads the row area of a grid with empty rows.
document.querySelectorAll('tbody[data-blank]').forEach(function (body) {
  var cells = body.rows[0].cells.length;
  for (var i = 0; i <= Number(body.dataset.blank); i++) {
    var row = body.insertRow();
    for (var c = 0; c < cells; c++) row.insertCell();
  }
});
```
